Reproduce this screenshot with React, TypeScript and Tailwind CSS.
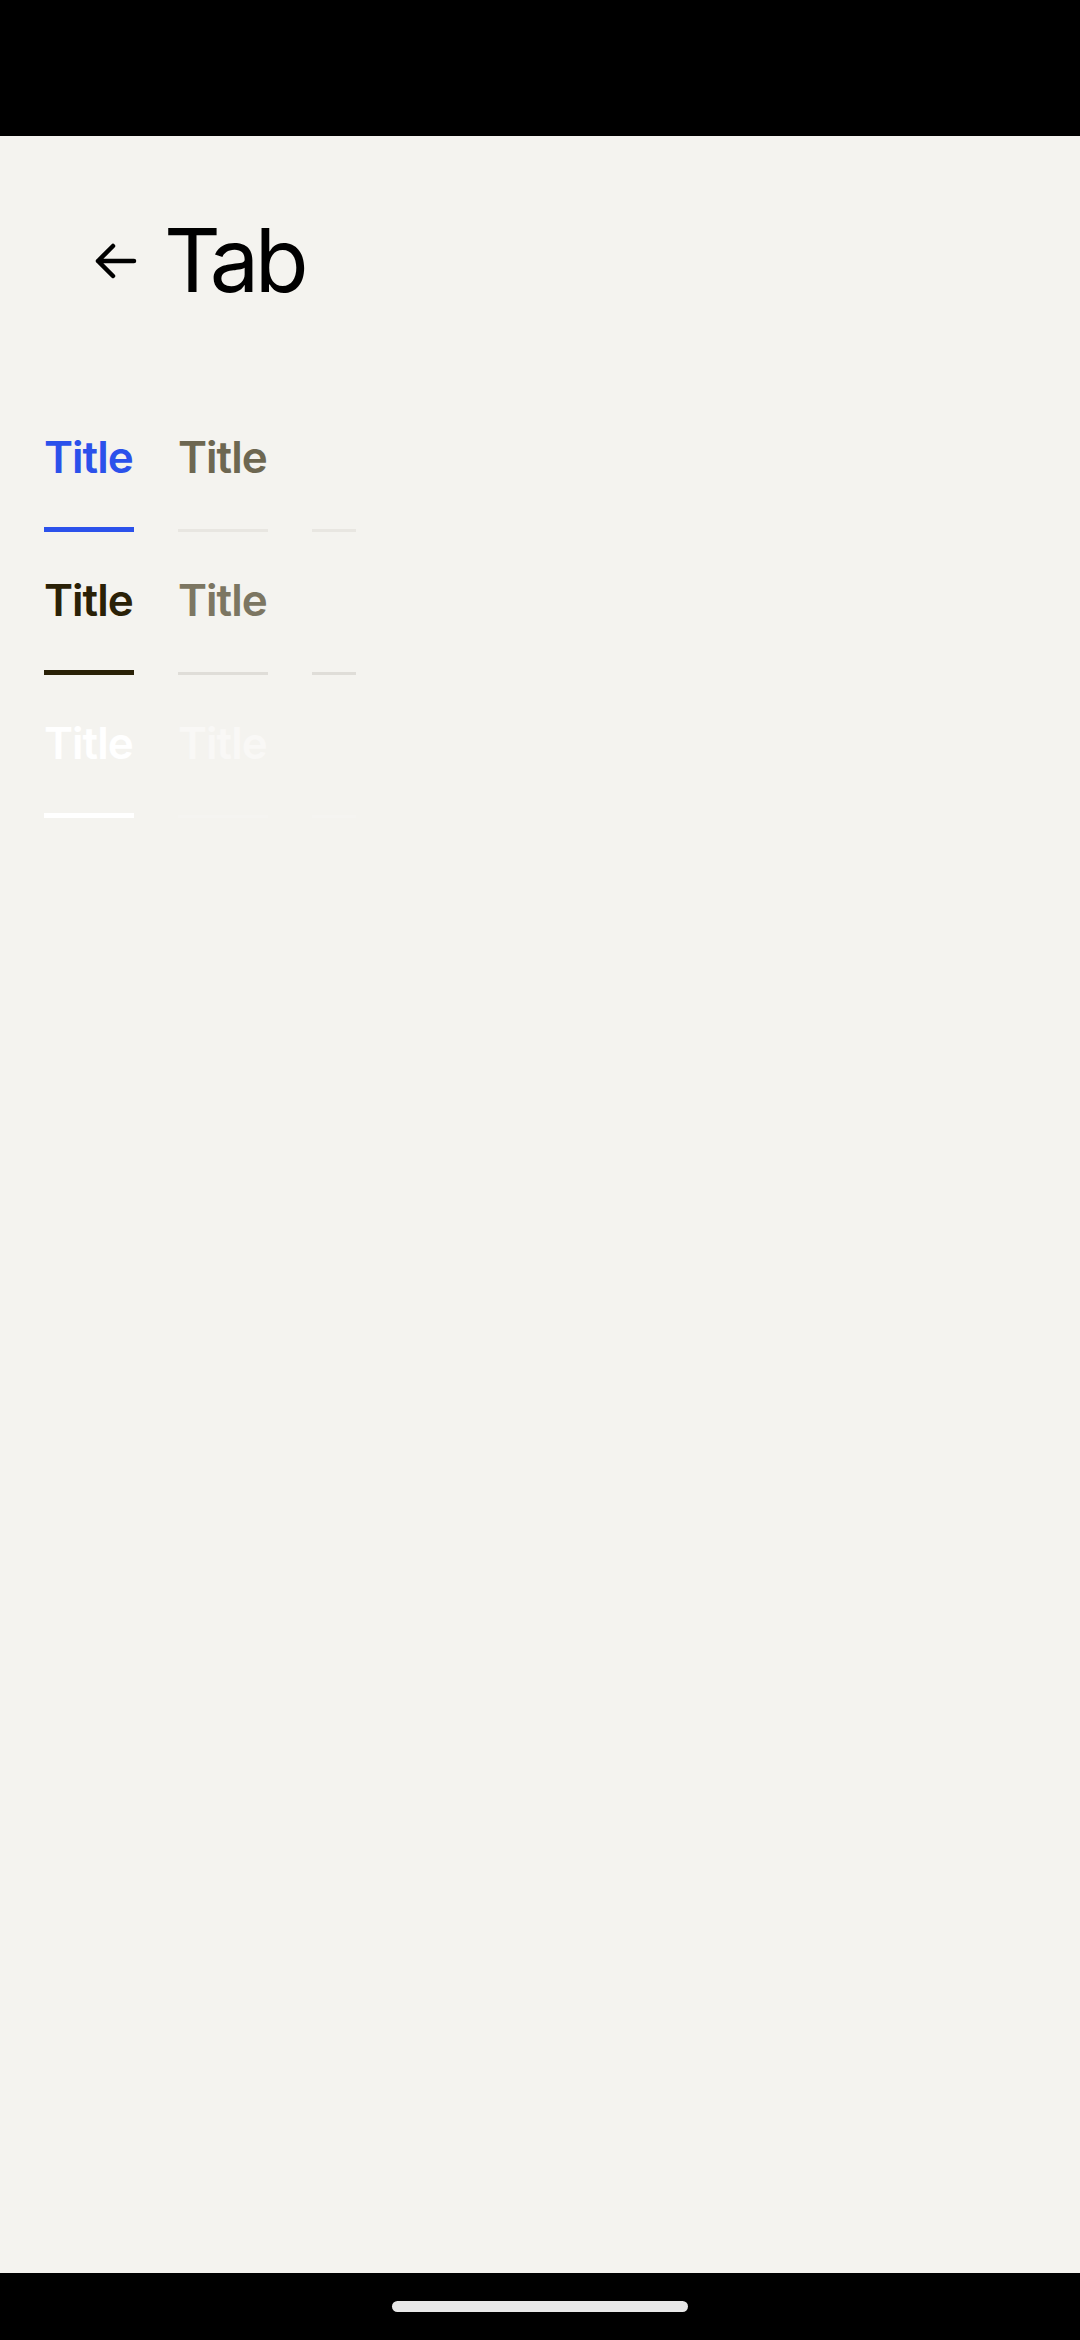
import React from "react";

type Row = {
  active: string;
  inactive: string;
  activeLine: string;
  inactiveLine: string;
};

const rows: Row[] = [
  { active: "text-[#2b51eb]", inactive: "text-[#6d6751]", activeLine: "bg-[#2b51eb]", inactiveLine: "bg-[#e8e6e1]" },
  { active: "text-[#2a2107]", inactive: "text-[#7c7662]", activeLine: "bg-[#2a2107]", inactiveLine: "bg-[#dfddd8]" },
  { active: "text-white", inactive: "text-[#f9f8f6]", activeLine: "bg-white", inactiveLine: "bg-[#f5f4f1]" },
];

function TabRow({ r }: { r: Row }) {
  return (
    <div className="flex gap-[44px] pl-[44px]">
      <div className="flex w-[90px] flex-col">
        <span className={`text-[44px] leading-[48px] font-semibold tracking-[-1px] ${r.active}`}>Title</span>
        <div className="flex h-[51px] items-end">
          <div className={`h-[5px] w-full ${r.activeLine}`} />
        </div>
      </div>
      <div className="flex w-[90px] flex-col">
        <span className={`text-[44px] leading-[48px] font-semibold tracking-[-1px] ${r.inactive}`}>Title</span>
        <div className="flex h-[51px] items-end">
          <div className={`h-[3px] w-full ${r.inactiveLine}`} />
        </div>
      </div>
      <div className="flex w-[44px] flex-col">
        <span className="h-[48px]" />
        <div className="flex h-[51px] items-end">
          <div className={`h-[3px] w-full ${r.inactiveLine}`} />
        </div>
      </div>
    </div>
  );
}

export default function App() {
  return (
    <div className="flex h-[2340px] w-[1080px] flex-col bg-[#f4f3ef]" style={{ fontFamily: "Inter, 'Noto Sans', sans-serif" }}>
      <div className="h-[136px] shrink-0 bg-black" />
      <div className="flex flex-1 flex-col">
        <div className="mt-[76px] flex h-[96px] items-center">
          <svg className="ml-[94px] mt-[2px]" width="44" height="36" viewBox="0 0 44 36" fill="none">
            <path d="M40 18H4M19 3L4 18L19 33" stroke="#000" strokeWidth="4.5" strokeLinecap="round" strokeLinejoin="round" />
          </svg>
          <span className="ml-[26px] text-[88px] leading-[96px] text-black tracking-[-4.5px]">Tab</span>
        </div>
        <div className="mt-[125px] flex flex-col gap-[44px]">
          {rows.map((r, i) => (
            <TabRow key={i} r={r} />
          ))}
        </div>
      </div>
      <div className="flex h-[67px] shrink-0 justify-center bg-black pt-[28px]">
        <div className="h-[11px] w-[296px] rounded-full bg-[#e8e8e8]" />
      </div>
    </div>
  );
}
